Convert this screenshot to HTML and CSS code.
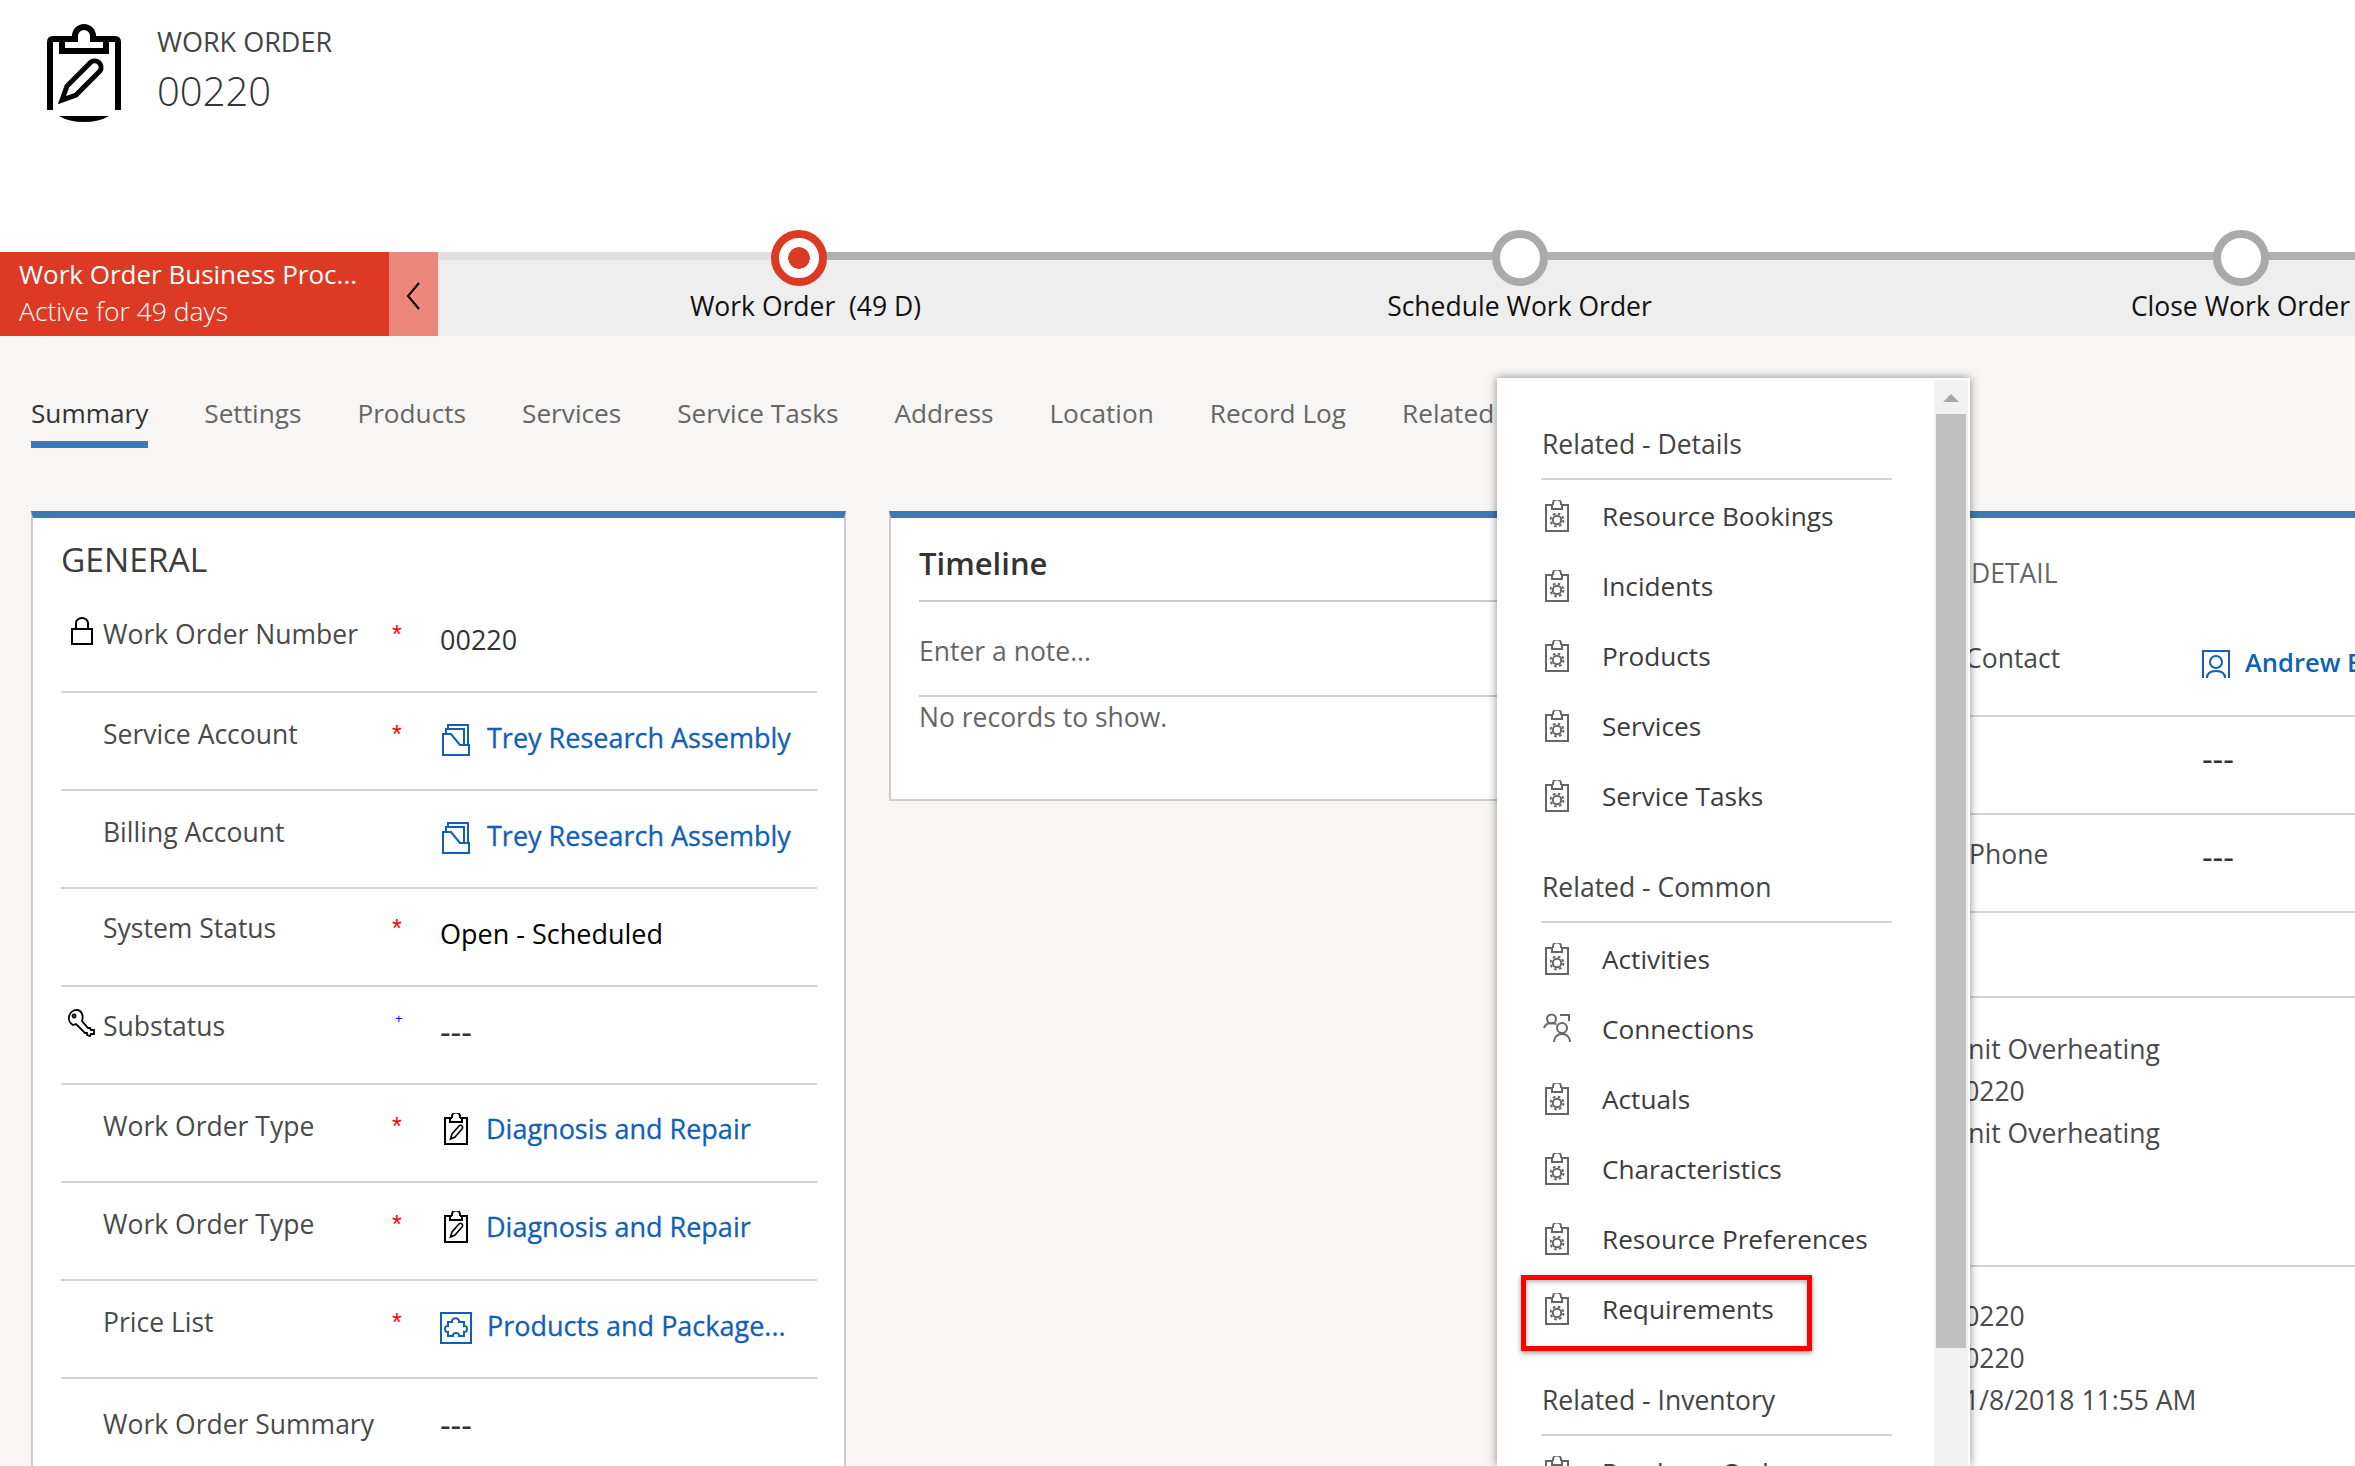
FILE: index.html
```html
<!DOCTYPE html>
<html lang="en">
<head>
  <meta charset="UTF-8">
  <title>Work Order 00220</title>
  <link rel="stylesheet" href="styles.css">
</head>
<body>
  <svg class="sprite" aria-hidden="true">
    <symbol id="i-task" viewBox="0 0 24 32">
      <path d="M8 5H1v26h22V5h-7M8 5V3.5a4 4 0 0 1 8 0V5M7 5v4h10V5" fill="none" stroke="currentColor" stroke-width="2"/>
      <circle cx="12" cy="20" r="4.2" fill="none" stroke="currentColor" stroke-width="2"/>
      <circle cx="12" cy="20" r="6.4" fill="none" stroke="currentColor" stroke-width="2" stroke-dasharray="2.6 2.43"/>
    </symbol>
    <symbol id="i-people" viewBox="0 0 28 30">
      <circle cx="8.5" cy="6" r="4.5" fill="none" stroke="currentColor" stroke-width="2"/>
      <path d="M1 15c1-3.500 4-5 7.500-5 2 0 3.500.5 5 1.500M17 2h9v6" fill="none" stroke="currentColor" stroke-width="2"/>
      <circle cx="19" cy="15" r="5" fill="none" stroke="currentColor" stroke-width="2"/>
      <path d="M11 29c0-5 3.500-8 8-8s8 3 8 8" fill="none" stroke="currentColor" stroke-width="2"/>
    </symbol>
    <symbol id="i-account" viewBox="0 0 28 32">
      <path d="M1 10h8l9 11h9v10H1zM4 10V5h18v16M6 5V1h20v20" fill="none" stroke="currentColor" stroke-width="2"/>
    </symbol>
    <symbol id="i-order" viewBox="0 0 24 32">
      <path d="M8 5H1v26h22V5h-7M8 5V3.500a4 4 0 0 1 8 0V5M6 5v4h12V5" fill="none" stroke="currentColor" stroke-width="2"/>
      <path d="M6.500 26l1.500-5 7-8a2 2 0 0 1 3 3l-7 8z" fill="none" stroke="currentColor" stroke-width="1.600"/>
    </symbol>
    <symbol id="i-price" viewBox="0 0 32 32">
      <path d="M1 1h30v30H1z" fill="none" stroke="currentColor" stroke-width="2"/>
      <path d="M8 10h4c-1-5 8-5 7 0h5v4c4-1 4 7 0 6v4h-5c1-4-7-4-6 0H8v-4c-4 1-4-7 0-6z" fill="none" stroke="currentColor" stroke-width="2"/>
    </symbol>
    <symbol id="i-contact" viewBox="0 0 28 28">
      <path d="M1 28V1h26v27M5 28c0-5 4-7 9-7s9 2 9 7" fill="none" stroke="currentColor" stroke-width="2"/>
      <circle cx="14" cy="12" r="6" fill="none" stroke="currentColor" stroke-width="2"/>
    </symbol>
  </svg>

  <header class="page-head">
    <svg class="head-icon" viewBox="0 0 74 98">
      <path d="M3 86V18q0-3 3-3h22v-3a9 9 0 0 1 18 0v3h22q3 0 3 3v68" fill="none" stroke="#000" stroke-width="6"/>
      <path d="M15 15v12h44V15" fill="none" stroke="#000" stroke-width="6"/>
      <path d="M15 76l5-14 24-24a6.500 6.500 0 0 1 9 9L29 71z" fill="none" stroke="#000" stroke-width="5"/>
      <path d="M12 92h50q-10 6-25 6t-25-6z" fill="#000"/>
    </svg>
    <div class="head-text">
      <div class="head-type">WORK ORDER</div>
      <div class="head-name">00220</div>
    </div>
  </header>

  <section class="bpf">
    <div class="bpf-flag">
      <div class="bpf-title">Work Order Business Proc...</div>
      <div class="bpf-sub">Active for 49 days</div>
    </div>
    <div class="bpf-toggle">
      <svg width="14" height="28" viewBox="0 0 14 28"><path d="M13 1L2 14l11 13" fill="none" stroke="#000" stroke-width="2"/></svg>
    </div>
    <div class="bpf-track">
      <div class="stage">
        <div class="dot dot-active"></div>
        <div class="stage-label stage-current">Work Order&nbsp; (49 D)</div>
      </div>
      <div class="stage">
        <div class="dot"></div>
        <div class="stage-label">Schedule Work Order</div>
      </div>
      <div class="stage">
        <div class="dot"></div>
        <div class="stage-label">Close Work Order</div>
      </div>
    </div>
  </section>

  <nav class="tabs">
    <a class="tab tab-active">Summary</a>
    <a class="tab">Settings</a>
    <a class="tab">Products</a>
    <a class="tab">Services</a>
    <a class="tab">Service Tasks</a>
    <a class="tab">Address</a>
    <a class="tab">Location</a>
    <a class="tab">Record Log</a>
    <a class="tab">Related</a>
  </nav>

  <main class="cards">
    <section class="card card-general">
      <h2 class="general-title">GENERAL</h2>

      <div class="row row-plain">
        <div class="row-icon">
          <svg class="lock" viewBox="0 0 22 28"><path d="M1 12h20v15H1zM5 12V6a6 5 0 0 1 12 0v6" fill="none" stroke="#000" stroke-width="2"/></svg>
        </div>
        <div class="row-label">Work Order Number</div>
        <div class="req">*</div>
        <div class="row-value">00220</div>
      </div>

      <div class="row">
        <div class="row-icon"></div>
        <div class="row-label">Service Account</div>
        <div class="req">*</div>
        <div class="row-value"><a class="lookup"><svg class="ic-account"><use href="#i-account"/></svg>Trey Research Assembly</a></div>
      </div>

      <div class="row">
        <div class="row-icon"></div>
        <div class="row-label">Billing Account</div>
        <div></div>
        <div class="row-value"><a class="lookup"><svg class="ic-account"><use href="#i-account"/></svg>Trey Research Assembly</a></div>
      </div>

      <div class="row row-plain">
        <div class="row-icon"></div>
        <div class="row-label">System Status</div>
        <div class="req">*</div>
        <div class="row-value value-dark">Open - Scheduled</div>
      </div>

      <div class="row row-plain">
        <div class="row-icon">
          <svg class="key" viewBox="0 0 28 28"><path d="M9 1a8 8 0 0 0-4 15l3-1 9 9h2v2l3 1 1-2h3v-4h-3l-1-2h-2l-6-7c2-6-1-11-5-11zM6 5.500a1.500 1.500 0 1 0 .1 0z" fill="none" stroke="#000" stroke-width="1.800"/></svg>
        </div>
        <div class="row-label">Substatus</div>
        <div class="req req-rec">+</div>
        <div class="row-value value-empty">---</div>
      </div>

      <div class="row">
        <div class="row-icon"></div>
        <div class="row-label">Work Order Type</div>
        <div class="req">*</div>
        <div class="row-value"><a class="lookup"><svg class="ic-order"><use href="#i-order"/></svg>Diagnosis and Repair</a></div>
      </div>

      <div class="row">
        <div class="row-icon"></div>
        <div class="row-label">Work Order Type</div>
        <div class="req">*</div>
        <div class="row-value"><a class="lookup"><svg class="ic-order"><use href="#i-order"/></svg>Diagnosis and Repair</a></div>
      </div>

      <div class="row">
        <div class="row-icon"></div>
        <div class="row-label">Price List</div>
        <div class="req">*</div>
        <div class="row-value"><a class="lookup"><svg class="ic-price"><use href="#i-price"/></svg>Products and Package...</a></div>
      </div>

      <div class="row row-last">
        <div class="row-icon"></div>
        <div class="row-label">Work Order Summary</div>
        <div></div>
        <div class="row-value value-empty">---</div>
      </div>
    </section>

    <section class="card card-timeline">
      <h2 class="timeline-title">Timeline</h2>
      <div class="timeline-note">Enter a note...</div>
      <div class="timeline-empty">No records to show.</div>
    </section>

    <section class="card card-detail">
      <h2 class="detail-title">DETAIL</h2>
      <div class="detail-row">
        <div class="detail-label">Contact</div>
        <a class="lookup lookup-strong"><svg class="ic-contact"><use href="#i-contact"/></svg>Andrew B</a>
      </div>
      <div class="detail-row">
        <div class="detail-label"></div>
        <div class="value-empty">---</div>
      </div>
      <div class="detail-row">
        <div class="detail-label detail-label-phone">Phone</div>
        <div class="value-empty">---</div>
      </div>
      <div class="detail-gap"></div>
      <div class="detail-block detail-block-a">
        <div>Unit Overheating</div>
        <div>00220</div>
        <div>Unit Overheating</div>
      </div>
      <div class="detail-block detail-block-b">
        <div>00220</div>
        <div>00220</div>
        <div>11/8/2018 11:55 AM</div>
      </div>
    </section>
  </main>

  <aside class="menu">
    <div class="menu-list">
      <div class="menu-head">Related - Details</div>
      <div class="menu-item"><svg class="ic-task"><use href="#i-task"/></svg>Resource Bookings</div>
      <div class="menu-item"><svg class="ic-task"><use href="#i-task"/></svg>Incidents</div>
      <div class="menu-item"><svg class="ic-task"><use href="#i-task"/></svg>Products</div>
      <div class="menu-item"><svg class="ic-task"><use href="#i-task"/></svg>Services</div>
      <div class="menu-item"><svg class="ic-task"><use href="#i-task"/></svg>Service Tasks</div>

      <div class="menu-head">Related - Common</div>
      <div class="menu-item"><svg class="ic-task"><use href="#i-task"/></svg>Activities</div>
      <div class="menu-item"><svg class="ic-people"><use href="#i-people"/></svg>Connections</div>
      <div class="menu-item"><svg class="ic-task"><use href="#i-task"/></svg>Actuals</div>
      <div class="menu-item"><svg class="ic-task"><use href="#i-task"/></svg>Characteristics</div>
      <div class="menu-item"><svg class="ic-task"><use href="#i-task"/></svg>Resource Preferences</div>
      <div class="menu-item menu-item-marked"><svg class="ic-task"><use href="#i-task"/></svg>Requirements</div>

      <div class="menu-head">Related - Inventory</div>
      <div class="menu-item"><svg class="ic-task"><use href="#i-task"/></svg>Purchase Orders</div>
    </div>
    <div class="menu-scroll">
      <div class="scroll-up"></div>
      <div class="scroll-thumb"></div>
    </div>
  </aside>
</body>
</html>
```

FILE: styles.css
```css
/* page */
body {
  margin: 0;
  width: 2355px;
  height: 1466px;
  overflow: hidden;
  position: relative;
  background: #f7f6f4;
  font-family: "Open Sans", "Noto Sans", sans-serif;
  font-size: 26.5px;
  line-height: 34px;
  color: #333;
}

.sprite {
  position: absolute;
  width: 0;
  height: 0;
}

/* header */
.page-head {
  height: 252px;
  box-sizing: border-box;
  background: #fff;
  padding: 24px 0 0 47px;
  display: flex;
  align-items: flex-start;
  gap: 36px;
}

.head-icon {
  width: 74px;
  height: 98px;
}

.head-type {
  font-size: 27px;
  line-height: 36px;
  color: #444;
}

.head-name {
  font-size: 40px;
  line-height: 54px;
  margin-top: 4px;
  font-weight: 300;
  color: #333;
}

/* process bar */
.bpf {
  display: flex;
  height: 84px;
}

.bpf-flag {
  width: 389px;
  box-sizing: border-box;
  flex: none;
  background: #dc3a24;
  color: #fff;
  padding: 4px 0 0 19px;
  line-height: 37px;
  white-space: nowrap;
}

.bpf-title {
  font-size: 26px;
}

.bpf-sub {
  font-weight: 300;
}

.bpf-toggle {
  width: 49px;
  flex: none;
  background: #ec877b;
  display: flex;
  align-items: center;
  justify-content: center;
  padding: 4px 2px 0 0;
  box-sizing: border-box;
}

.bpf-track {
  flex: 1;
  display: flex;
  min-width: 0;
  background: linear-gradient(to right, #e0e0e0 360px, #b0b0b0 360px) top / 100% 8px no-repeat, #eee;
}

.stage {
  width: 721px;
  flex: none;
  display: flex;
  flex-direction: column;
  align-items: center;
}

.dot {
  width: 56px;
  height: 56px;
  box-sizing: border-box;
  margin-top: -22px;
  border-radius: 50%;
  border: 8px solid #aaa;
  background: #fff;
}

.dot-active {
  border-color: #dc3a24;
  background: radial-gradient(circle, #dc3a24 10.5px, #fff 11px);
}

.stage-label {
  margin-top: 3px;
  color: #111;
  white-space: nowrap;
}

.stage-current {
  padding-left: 14px;
}

/* tabs */
.tabs {
  display: flex;
  gap: 56px;
  padding: 60px 0 0 31px;
  height: 115px;
  box-sizing: border-box;
  font-size: 26.2px;
  color: #666;
  white-space: nowrap;
}

.tab {
  height: 52px;
  box-sizing: border-box;
}

.tab-active {
  color: #333;
  border-bottom: 7px solid #3b79b7;
}

/* cards */
.cards {
  display: flex;
  align-items: flex-start;
  margin: 60px 0 0 31px;
}

.card {
  flex: none;
  box-sizing: border-box;
  background: #fff;
  border: 2px solid #ccc;
  border-top: 7px solid #3b79b7;
}

.card-general {
  width: 815px;
  height: 1000px;
  padding: 0 27px 0 28px;
  margin-right: 43px;
}

.general-title {
  margin: 0;
  height: 77px;
  padding-top: 21px;
  box-sizing: border-box;
  font-size: 33.5px;
  line-height: 40px;
  font-weight: 400;
  color: #3c3c3c;
}

.row {
  display: grid;
  grid-template-columns: 42px 289px 48px 1fr;
  height: 98px;
  box-sizing: border-box;
  padding-top: 24px;
  border-bottom: 2px solid #d4d4d4;
  color: #4a4a4a;
}

.row-plain {
  padding-top: 22px;
}

.row-plain .row-value {
  margin-top: 6px;
}

.row-last {
  padding-top: 28px;
  border-bottom: 0;
}

.row-last .row-value {
  margin-top: 1px;
}

.row-icon {
  position: relative;
}

.lock {
  width: 22px;
  height: 28px;
  display: block;
  margin: 0 0 0 10px;
}

.key {
  width: 28px;
  height: 28px;
  display: block;
  margin: 0 0 0 7px;
}

.req {
  color: #f00;
  font-family: "Liberation Sans", sans-serif;
  font-size: 25px;
}

.req-rec {
  color: #00f;
  font-size: 13px;
  line-height: 20px;
  padding-left: 3px;
}

.row-value {
  margin-top: 3px;
  font-size: 27px;
  color: #333;
  white-space: nowrap;
}

.value-dark {
  color: #000;
}

.value-empty {
  color: #333;
  font-size: 33px;
}

.lookup {
  display: flex;
  align-items: center;
  color: #1160b7;
  -webkit-text-stroke: 0.3px #1160b7;
  white-space: nowrap;
}

.lookup-strong {
  align-self: start;
  margin-top: 4px;
  font-size: 25.5px;
  font-weight: 600;
  -webkit-text-stroke: 0;
}

.ic-account {
  width: 28px;
  height: 32px;
  color: #1160b7;
  margin: 4px 17px 0 2px;
  flex: none;
}

.ic-order {
  width: 24px;
  height: 32px;
  color: #000;
  margin: 0 18px 0 4px;
  flex: none;
}

.ic-price {
  width: 32px;
  height: 32px;
  color: #1160b7;
  margin: 4px 15px 0 0;
  flex: none;
}

.ic-contact {
  width: 28px;
  height: 28px;
  color: #1160b7;
  margin: 4px 15px 0 0;
  flex: none;
}

.card-timeline {
  width: 1020px;
  height: 290px;
  padding: 0 28px;
  margin-right: 21px;
}

.timeline-title {
  margin: 0;
  height: 84px;
  border-bottom: 2px solid #ccc;
  font-size: 31px;
  line-height: 40px;
  padding-top: 25px;
  box-sizing: border-box;
  font-weight: 600;
}

.timeline-note {
  height: 95px;
  box-sizing: border-box;
  padding-top: 32px;
  border-bottom: 2px solid #ccc;
  color: #666;
}

.timeline-empty {
  padding-top: 3px;
  color: #666;
}

.card-detail {
  width: 600px;
  height: 1000px;
  border-right: 0;
}

.detail-title {
  margin: 0;
  height: 101px;
  box-sizing: border-box;
  padding: 38px 0 0 39px;
  font-size: 26.5px;
  font-weight: 400;
  color: #666;
}

.detail-row {
  display: grid;
  grid-template-columns: 270px 1fr;
  height: 98px;
  box-sizing: border-box;
  border-bottom: 2px solid #d4d4d4;
  padding-top: 22px;
  color: #4a4a4a;
}

.detail-row .value-empty {
  padding-top: 3px;
}

.detail-label {
  padding-left: 33px;
}

.detail-label-phone {
  padding-left: 37px;
}

.detail-gap {
  height: 85px;
  box-sizing: border-box;
  border-bottom: 2px solid #d4d4d4;
}

.detail-block {
  padding-left: 17px;
  line-height: 42px;
  color: #4a4a4a;
  box-sizing: border-box;
  border-bottom: 2px solid #d4d4d4;
}

.detail-block-a {
  height: 269px;
  padding-top: 30px;
}

.detail-block-b {
  padding-top: 28px;
  border-bottom: 0;
}

/* related menu, open over the page */
.menu {
  position: absolute;
  left: 1497px;
  top: 378px;
  width: 473px;
  height: 1088px;
  background: #fff;
  box-shadow: 0 0 9px rgba(0, 0, 0, 0.45);
  display: flex;
  overflow: hidden;
}

.menu-list {
  flex: 1;
  padding: 9px 42px 0 44px;
  min-width: 0;
}

.menu-head {
  height: 93px;
  box-sizing: border-box;
  display: flex;
  align-items: flex-end;
  padding: 0 0 17px 1px;
  border-bottom: 2px solid #d4d4d4;
  color: #444;
}

.menu-item {
  position: relative;
  height: 70px;
  box-sizing: border-box;
  padding: 2px 0 0 4px;
  display: flex;
  align-items: center;
  gap: 33px;
  font-size: 26.2px;
  color: #3c3c3c;
}

.ic-task {
  width: 24px;
  height: 32px;
  color: #666;
  flex: none;
}

.ic-people {
  width: 28px;
  height: 30px;
  color: #666;
  flex: none;
  margin: -2px -2px 0 -2px;
}

.menu-item-marked::after {
  content: "";
  position: absolute;
  left: -20px;
  top: 2px;
  width: 291px;
  height: 76px;
  box-sizing: border-box;
  border: 5px solid #f00;
  box-shadow: 0 2px 5px rgba(0, 0, 0, 0.4), inset 0 2px 5px rgba(0, 0, 0, 0.3);
}

.menu-scroll {
  width: 34px;
  margin: 2px 2px 0 0;
  background: #f1f1f1;
  flex: none;
  display: flex;
  flex-direction: column;
  align-items: center;
}

.scroll-up {
  width: 0;
  height: 0;
  margin-top: 14px;
  border-left: 8px solid transparent;
  border-right: 8px solid transparent;
  border-bottom: 8px solid #a6a6a6;
}

.scroll-thumb {
  width: 30px;
  height: 934px;
  margin-top: 12px;
  background: #c0c0c0;
}
```
